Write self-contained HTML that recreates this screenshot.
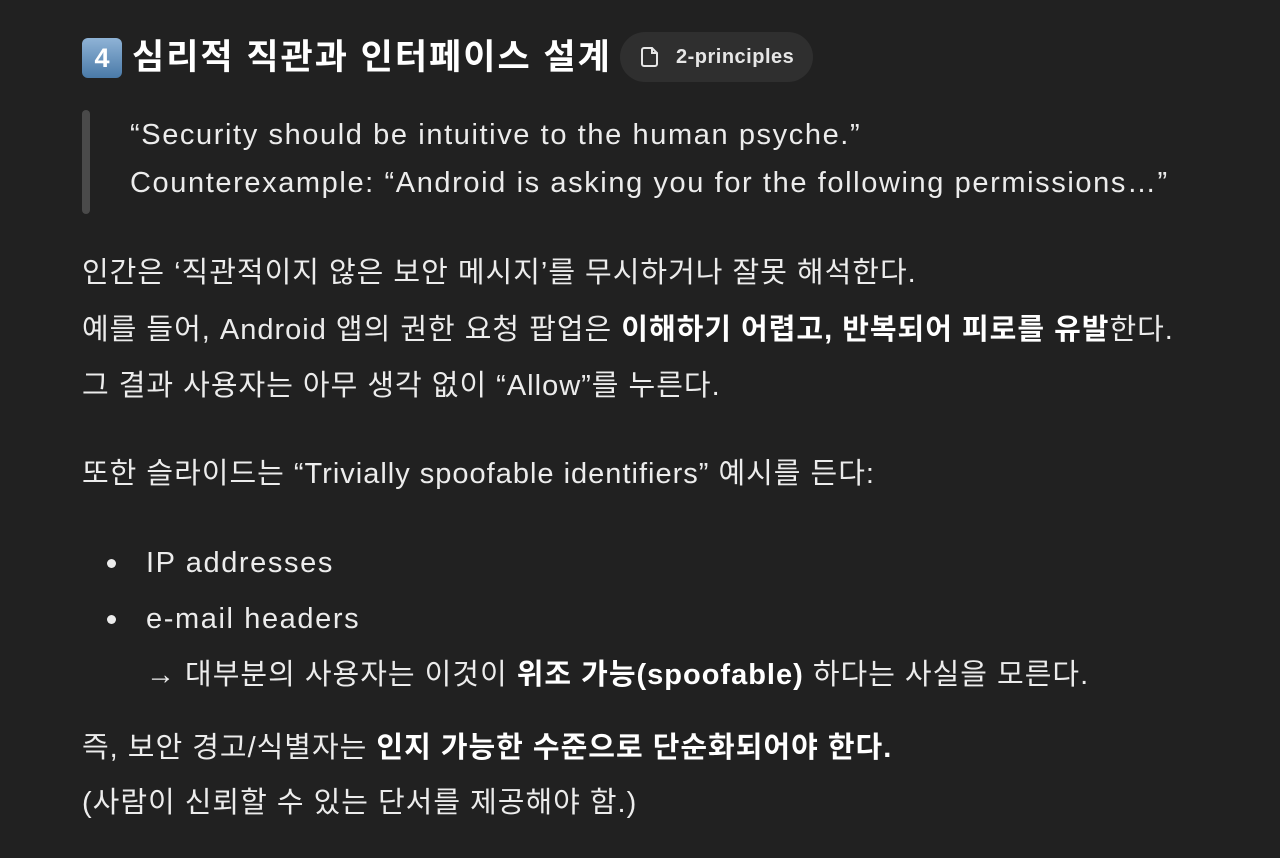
<!DOCTYPE html>
<html><head><meta charset="utf-8"><style>
body{margin:0;background:#212121;color:#ececec;font-family:"Liberation Sans","Noto Sans CJK KR",sans-serif;width:1280px;height:858px;overflow:hidden;position:relative}
.a{position:absolute;white-space:nowrap;font-size:29px;line-height:1;letter-spacing:1px}
.e{letter-spacing:1.6px}
b{font-weight:700;color:#fff}
h1{position:absolute;left:82px;top:36px;margin:0;font-size:35px;letter-spacing:2px;font-weight:700;color:#fff;white-space:nowrap;line-height:44px}
.k{display:inline-block;width:40px;height:40px;background:linear-gradient(#8fb3d6,#4a7aa8);border-radius:6px;color:#fff;font-size:27px;text-align:center;line-height:40px;vertical-align:top;margin-top:2px;margin-right:10px;letter-spacing:0}
.pill{position:absolute;left:620px;top:32px;width:193px;height:50px;border-radius:25px;background:#2f2f2f;color:#e6e6e6;font-size:20px;letter-spacing:.5px;font-weight:700;line-height:50px}
.bar{position:absolute;left:82px;top:110px;width:8px;height:104px;border-radius:4px;background:#4a4a4a}
.dot{position:absolute;width:9px;height:9px;border-radius:50%;background:#ececec}
</style></head><body>
<h1><span class="k">4</span>심리적 직관과 인터페이스 설계</h1>
<div class="pill"><svg style="position:absolute;left:20px;top:14px" width="20" height="22" viewBox="0 0 20 22" fill="none" stroke="#e6e6e6" stroke-width="2"><path d="M4 2h8l5 5v11a2 2 0 0 1-2 2H4a2 2 0 0 1-2-2V4a2 2 0 0 1 2-2z"/><path d="M12 2v5h5"/></svg><span style="position:absolute;left:56px">2-principles</span></div>
<div class="bar"></div>
<div class="a e" style="left:130px;top:121px">“Security should be intuitive to the human psyche.”</div>
<div class="a e" style="left:130px;top:169px">Counterexample: “Android is asking you for the following permissions…”</div>
<div class="a" style="left:82px;top:259px">인간은 ‘직관적이지 않은 보안 메시지’를 무시하거나 잘못 해석한다.</div>
<div class="a" style="left:82px;top:316px">예를 들어, Android 앱의 권한 요청 팝업은 <b>이해하기 어렵고, 반복되어 피로를 유발</b>한다.</div>
<div class="a" style="left:82px;top:372px">그 결과 사용자는 아무 생각 없이 “Allow”를 누른다.</div>
<div class="a" style="left:82px;top:460px">또한 슬라이드는 “Trivially spoofable identifiers” 예시를 든다:</div>
<div class="dot" style="left:107px;top:559px"></div>
<div class="a e" style="left:146px;top:549px">IP addresses</div>
<div class="dot" style="left:107px;top:615px"></div>
<div class="a e" style="left:146px;top:605px">e-mail headers</div>
<div class="a" style="left:146px;top:661px">→ 대부분의 사용자는 이것이 <b>위조 가능(spoofable)</b> 하다는 사실을 모른다.</div>
<div class="a" style="left:82px;top:734px">즉, 보안 경고/식별자는 <b>인지 가능한 수준으로 단순화되어야 한다.</b></div>
<div class="a" style="left:82px;top:789px">(사람이 신뢰할 수 있는 단서를 제공해야 함.)</div>
</body></html>
